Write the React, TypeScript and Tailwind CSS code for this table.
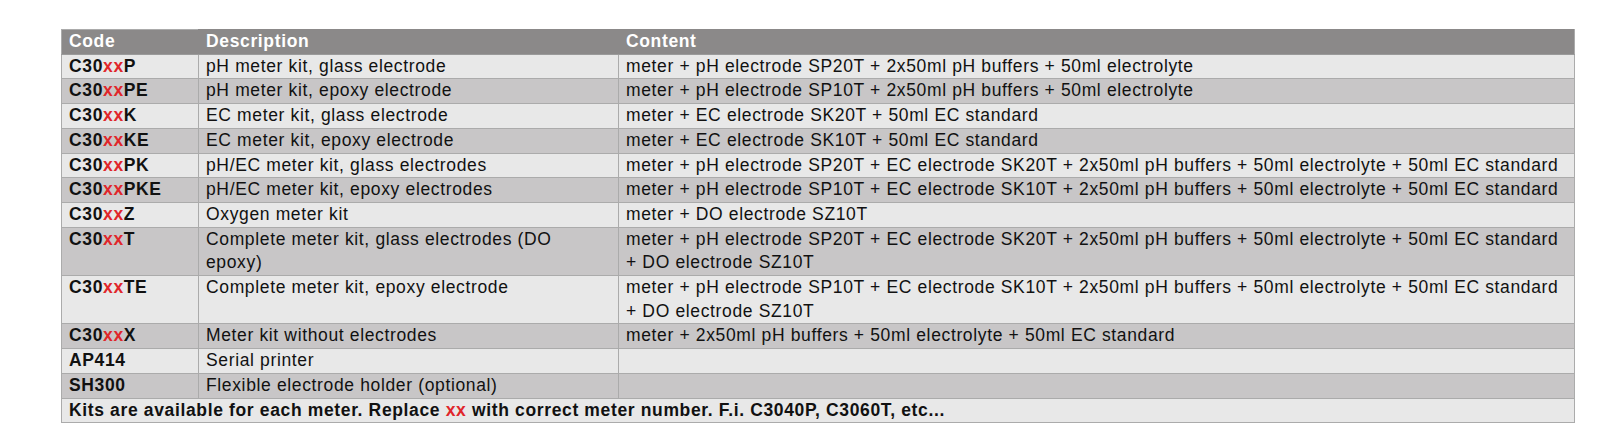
import React from 'react'

type Row = {
  code: string
  suffix?: string
  desc: string
  content: string
}

const rows: Row[] = [
  { code: 'C30', suffix: 'P', desc: 'pH meter kit, glass electrode', content: 'meter + pH electrode SP20T + 2x50ml pH buffers + 50ml electrolyte' },
  { code: 'C30', suffix: 'PE', desc: 'pH meter kit, epoxy electrode', content: 'meter + pH electrode SP10T + 2x50ml pH buffers + 50ml electrolyte' },
  { code: 'C30', suffix: 'K', desc: 'EC meter kit, glass electrode', content: 'meter + EC electrode SK20T + 50ml EC standard' },
  { code: 'C30', suffix: 'KE', desc: 'EC meter kit, epoxy electrode', content: 'meter + EC electrode SK10T + 50ml EC standard' },
  { code: 'C30', suffix: 'PK', desc: 'pH/EC meter kit, glass electrodes', content: 'meter + pH electrode SP20T + EC electrode SK20T + 2x50ml pH buffers + 50ml electrolyte + 50ml EC standard' },
  { code: 'C30', suffix: 'PKE', desc: 'pH/EC meter kit, epoxy electrodes', content: 'meter + pH electrode SP10T + EC electrode SK10T + 2x50ml pH buffers + 50ml electrolyte + 50ml EC standard' },
  { code: 'C30', suffix: 'Z', desc: 'Oxygen meter kit', content: 'meter + DO electrode SZ10T' },
  { code: 'C30', suffix: 'T', desc: 'Complete meter kit, glass electrodes (DO epoxy)', content: 'meter + pH electrode SP20T + EC electrode SK20T + 2x50ml pH buffers + 50ml electrolyte + 50ml EC standard + DO electrode SZ10T' },
  { code: 'C30', suffix: 'TE', desc: 'Complete meter kit, epoxy electrode', content: 'meter + pH electrode SP10T + EC electrode SK10T + 2x50ml pH buffers + 50ml electrolyte + 50ml EC standard + DO electrode SZ10T' },
  { code: 'C30', suffix: 'X', desc: 'Meter kit without electrodes', content: 'meter + 2x50ml pH buffers + 50ml electrolyte + 50ml EC standard' },
  { code: 'AP414', desc: 'Serial printer', content: '' },
  { code: 'SH300', desc: 'Flexible electrode holder (optional)', content: '' },
]

const cell = 'border border-[#ababab] px-[7px] py-0 align-top text-left'

export default function App() {
  return (
    <div className="bg-white w-[1624px] h-[434px] pt-[29px] pl-[61px]">
      <table
        className="table-fixed border-collapse w-[1514px] text-[17.5px] leading-[23.7px] tracking-[0.64px] text-[#111]"
        style={{ fontFamily: '"Liberation Sans", Arial, sans-serif' }}
      >
        <colgroup>
          <col className="w-[137px]" />
          <col className="w-[420px]" />
          <col />
        </colgroup>
        <thead>
          <tr className="bg-[#8b8989] text-white font-bold">
            <th className="border border-[#ababab] border-r-[#8b8989] border-b-[#9a9a9a] px-[7px] py-0 text-left">Code</th>
            <th className="border border-[#8b8989] border-b-[#9a9a9a] px-[7px] py-0 text-left">Description</th>
            <th className="border border-[#8b8989] border-r-[#ababab] border-b-[#9a9a9a] px-[7px] py-0 text-left">Content</th>
          </tr>
        </thead>
        <tbody>
          {rows.map((r, i) => (
            <tr key={r.code + (r.suffix ?? '')} className={i % 2 === 0 ? 'bg-[#e8e8e8]' : 'bg-[#c8c6c7]'}>
              <td className={cell + ' font-bold'}>
                {r.code}
                {r.suffix && (
                  <>
                    <span className="text-[#e0262b]">xx</span>
                    {r.suffix}
                  </>
                )}
              </td>
              <td className={cell}>{r.desc}</td>
              <td className={cell}>{r.content}</td>
            </tr>
          ))}
          <tr className="bg-[#e8e8e8]">
            <td colSpan={3} className={cell + ' font-bold'}>
              Kits are available for each meter. Replace <span className="text-[#e0262b]">xx</span> with correct meter number. F.i. C3040P, C3060T, etc...
            </td>
          </tr>
        </tbody>
      </table>
    </div>
  )
}
